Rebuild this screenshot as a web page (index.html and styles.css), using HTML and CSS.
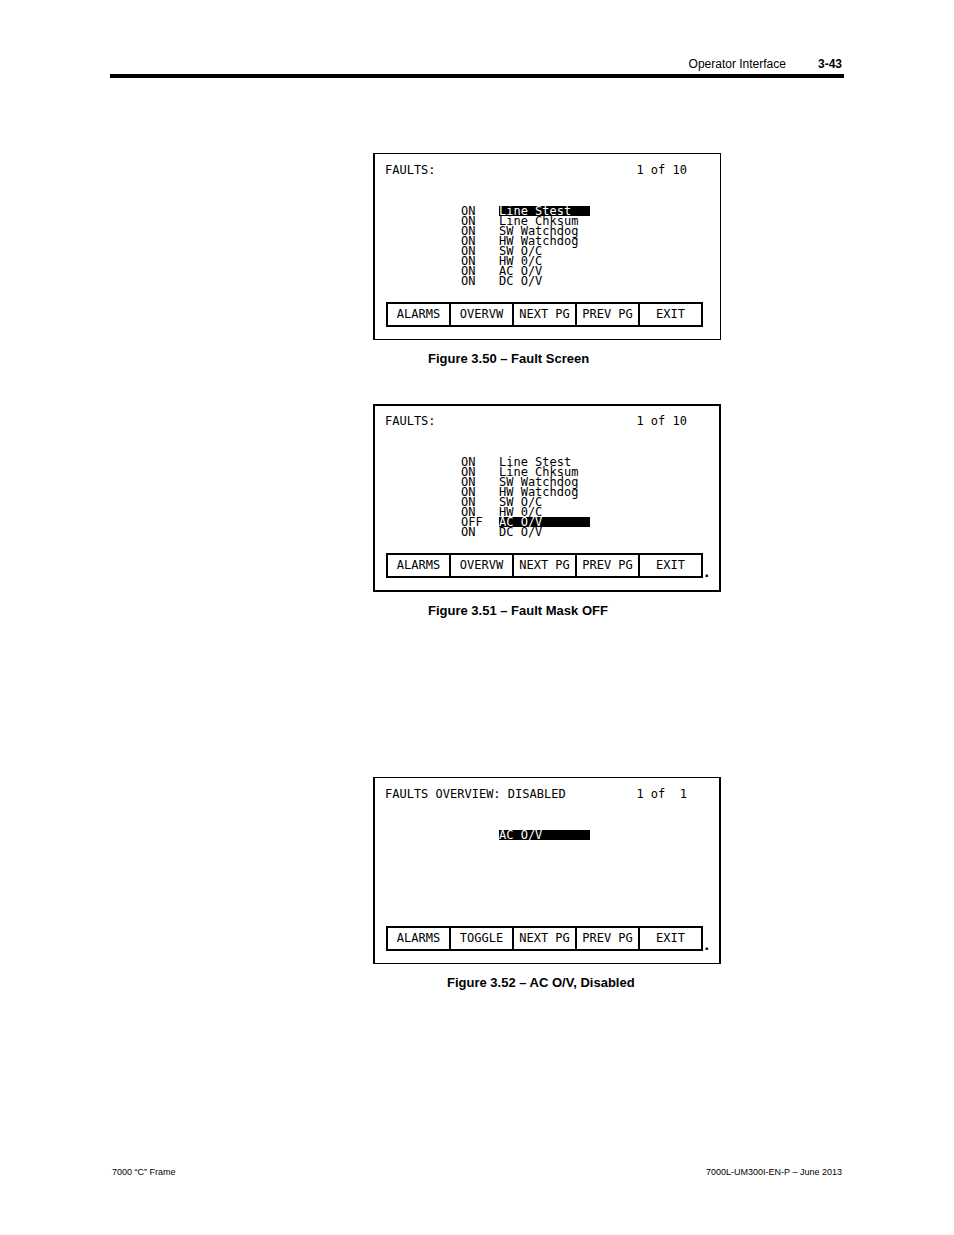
FILE: index.html
```
<!DOCTYPE html>
<html lang="en">
<head>
    <meta charset="UTF-8">
    <meta name="viewport" content="width=device-width, initial-scale=1.0">
    <title>Operator Interface</title>
    <link rel="stylesheet" href="styles.css">
</head>
<body>
    <header class="page-header">
        <span>Operator Interface</span>
        <strong>3-43</strong>
    </header>

    <main class="content">
        <figure class="figure">
            <div class="screen screen-thin">
                <div class="screen-title"><span>FAULTS:</span><span class="page-count">1 of 10</span></div>
                <table class="faults">
                    <tr><td>ON</td><td><span class="selected">Line Stest</span></td></tr>
                    <tr><td>ON</td><td>Line Chksum</td></tr>
                    <tr><td>ON</td><td>SW Watchdog</td></tr>
                    <tr><td>ON</td><td>HW Watchdog</td></tr>
                    <tr><td>ON</td><td>SW O/C</td></tr>
                    <tr><td>ON</td><td>HW 0/C</td></tr>
                    <tr><td>ON</td><td>AC O/V</td></tr>
                    <tr><td>ON</td><td>DC O/V</td></tr>
                </table>
                <div class="softkeys">
                    <button>ALARMS</button>
                    <button>OVERVW</button>
                    <button>NEXT PG</button>
                    <button>PREV PG</button>
                    <button>EXIT</button>
                </div>
            </div>
            <figcaption>Figure 3.50 – Fault Screen</figcaption>
        </figure>

        <figure class="figure">
            <div class="screen">
                <div class="screen-title"><span>FAULTS:</span><span class="page-count">1 of 10</span></div>
                <table class="faults">
                    <tr><td>ON</td><td>Line Stest</td></tr>
                    <tr><td>ON</td><td>Line Chksum</td></tr>
                    <tr><td>ON</td><td>SW Watchdog</td></tr>
                    <tr><td>ON</td><td>HW Watchdog</td></tr>
                    <tr><td>ON</td><td>SW O/C</td></tr>
                    <tr><td>ON</td><td>HW 0/C</td></tr>
                    <tr><td>OFF</td><td><span class="selected">AC O/V</span></td></tr>
                    <tr><td>ON</td><td>DC O/V</td></tr>
                </table>
                <div class="softkeys">
                    <button>ALARMS</button>
                    <button>OVERVW</button>
                    <button>NEXT PG</button>
                    <button>PREV PG</button>
                    <button>EXIT</button>
                </div>
                <span class="period">.</span>
            </div>
            <figcaption>Figure 3.51 – Fault Mask OFF</figcaption>
        </figure>

        <figure class="figure figure-overview">
            <div class="screen screen-sides">
                <div class="screen-title"><span>FAULTS OVERVIEW: DISABLED</span><span class="page-count">1 of&nbsp; 1</span></div>
                <table class="faults">
                    <tr><td></td><td><span class="selected">AC O/V</span></td></tr>
                </table>
                <div class="softkeys">
                    <button>ALARMS</button>
                    <button>TOGGLE</button>
                    <button>NEXT PG</button>
                    <button>PREV PG</button>
                    <button>EXIT</button>
                </div>
                <span class="period">.</span>
            </div>
            <figcaption>Figure 3.52 – AC O/V, Disabled</figcaption>
        </figure>
    </main>

    <footer class="page-footer">
        <span>7000 “C” Frame</span>
        <span>7000L-UM300I-EN-P – June 2013</span>
    </footer>
</body>
</html>
```
FILE: styles.css
```
* {
    margin: 0;
    padding: 0;
    box-sizing: border-box;
}

body {
    display: flex;
    flex-direction: column;
    min-height: 100vh;
    padding: 56px 110px;
    background: #fff;
    color: #000;
    font-family: "Liberation Sans", Arial, sans-serif;
}

.page-header {
    display: flex;
    justify-content: flex-end;
    gap: 32px;
    padding: 0 2px 2px;
    border-bottom: 4px solid #000;
    font-size: 12px;
    line-height: 16px;
}

.content {
    display: grid;
    grid-template-columns: 263fr 348fr 123fr;
    padding-top: 75px;
}

.figure {
    grid-column: 2;
    min-width: 0;
    margin-bottom: 36px;
}

.figure-overview {
    margin-top: 121px;
}

.screen {
    position: relative;
    display: flex;
    flex-direction: column;
    min-height: 188px;
    padding: 7px 16px 12px 10px;
    border: 2px solid #000;
    font-family: "DejaVu Sans Mono", "Liberation Mono", monospace;
    font-size: 12px;
}

.screen-thin,
.screen-sides {
    min-height: 187px;
    padding-top: 8px;
}

.screen-thin {
    padding-right: 17px;
    border-width: 1px 1px 1px 2px;
}

.screen-sides {
    border-width: 1px 2px;
}

.screen-title {
    display: flex;
    justify-content: space-between;
    padding-right: 16px;
    line-height: 16px;
    white-space: nowrap;
}

.faults {
    margin: 28px 0 0 76px;
    width: 129px;
    border-collapse: collapse;
    table-layout: fixed;
    line-height: 10px;
    white-space: nowrap;
}

.faults td:first-child {
    width: 38px;
}

.selected {
    display: block;
    background: #000;
    color: #fff;
}

.softkeys {
    display: grid;
    grid-template-columns: repeat(5, 1fr);
    gap: 2px;
    margin-top: auto;
    margin-left: 1px;
    padding: 2px;
    background: #000;
}

.softkeys button {
    height: 21px;
    padding-bottom: 2px;
    border: none;
    background: #fff;
    color: #000;
    font: inherit;
    white-space: nowrap;
}

/* full stop printed beside the screen picture */
.period {
    position: absolute;
    right: 10px;
    bottom: 10px;
    font: bold 16px/16px "Liberation Sans", sans-serif;
}

figcaption {
    padding: 10px 0 0 55px;
    font-size: 13px;
    font-weight: bold;
    line-height: 18px;
    white-space: nowrap;
}

.figure-overview figcaption {
    padding-left: 74px;
}

.page-footer {
    display: flex;
    justify-content: space-between;
    margin-top: auto;
    padding: 0 2px;
    font-size: 9px;
    line-height: 14px;
}
```
